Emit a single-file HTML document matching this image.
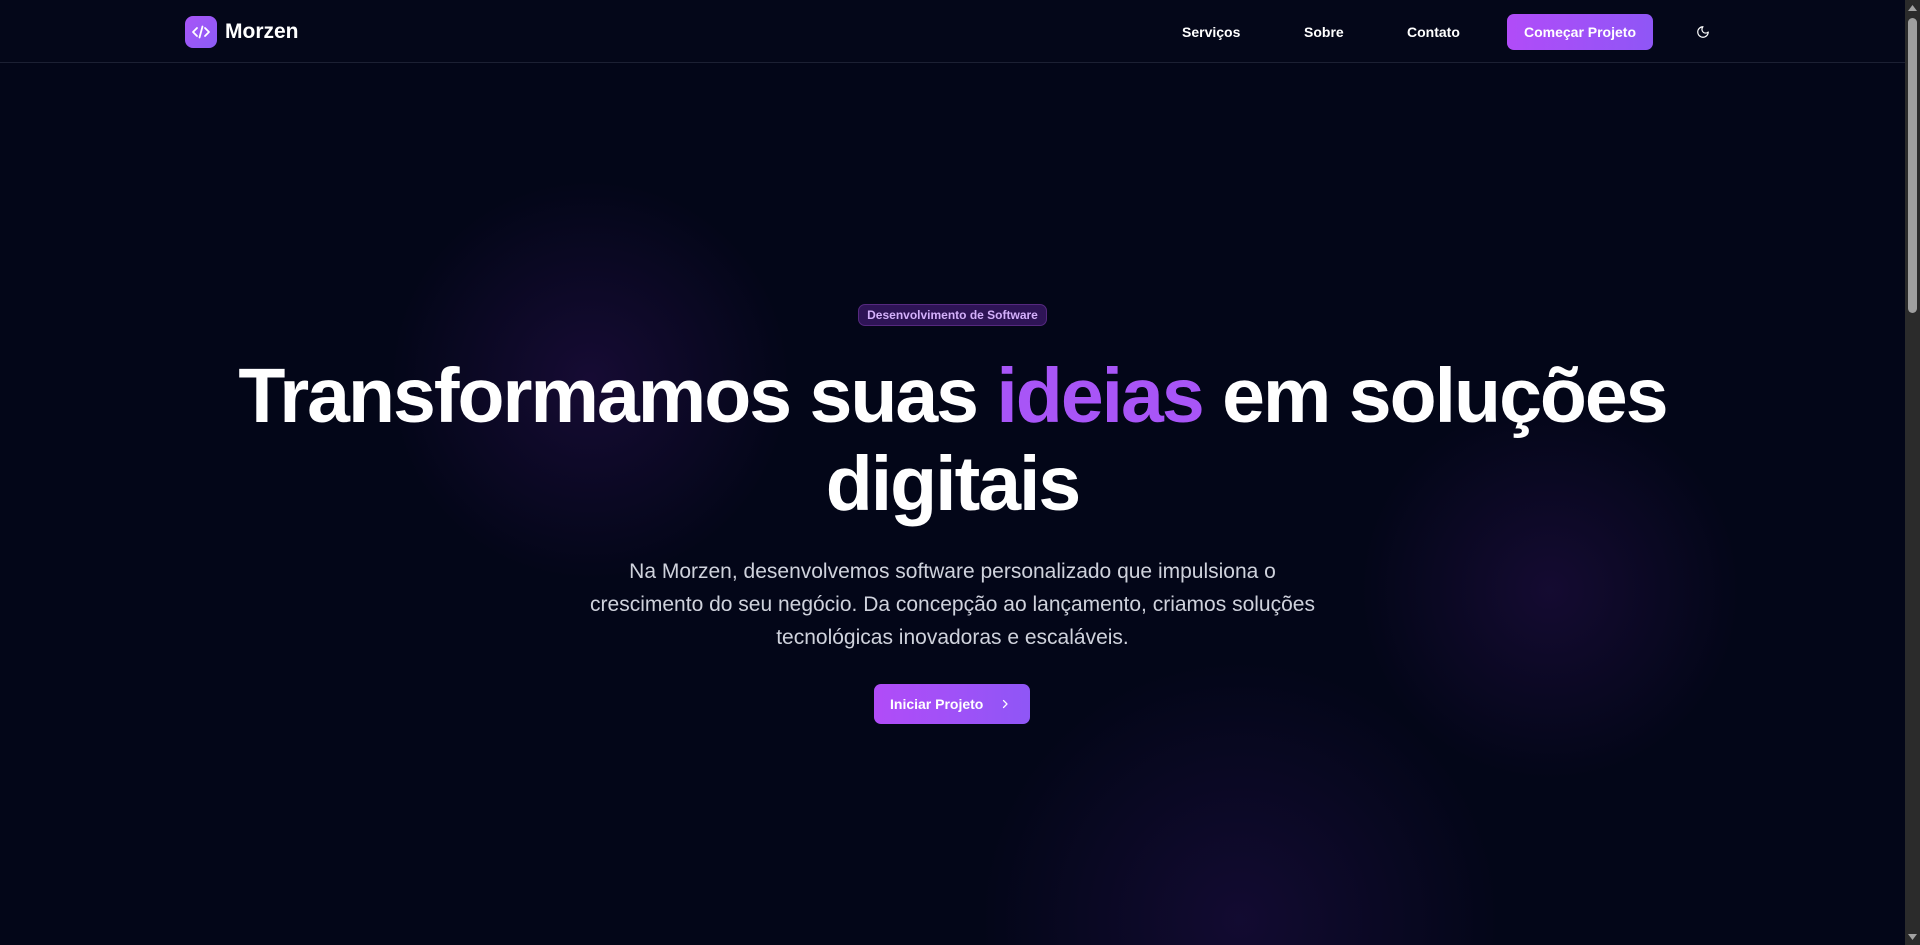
<!DOCTYPE html>
<html><head><meta charset="utf-8">
<style>
*{margin:0;padding:0;box-sizing:border-box}
html,body{width:1920px;height:945px;overflow:hidden;background:#030618;font-family:"Liberation Sans",sans-serif;color:#fff}
.page{position:absolute;left:0;top:0;width:1905px;height:945px;overflow:hidden;background:
radial-gradient(circle 200px at 590px 380px,rgba(90,30,150,0.22),rgba(90,30,150,0)),
radial-gradient(circle 190px at 1550px 590px,rgba(90,30,150,0.2),rgba(90,30,150,0)),
radial-gradient(circle 260px at 1240px 920px,rgba(80,30,150,0.2),rgba(80,30,150,0)),
#030618}
nav{position:absolute;left:0;top:0;width:1905px;height:63px;border-bottom:1px solid #1c2033;background:#040719}
.logo{position:absolute;left:185px;top:16px;width:32px;height:32px;border-radius:8px;background:linear-gradient(135deg,#a855f7,#8b5cf6)}
.brand{position:absolute;left:225px;top:20px;font-size:21px;font-weight:700}
.nl{position:absolute;top:24px;font-size:14px;font-weight:700;white-space:nowrap}
.cta{position:absolute;left:1507px;top:14px;width:146px;height:36px;border-radius:7px;background:linear-gradient(90deg,#b14cf8,#8f56f6);font-size:14px;font-weight:700;line-height:36px;text-align:center;white-space:nowrap}
.badge{position:absolute;left:858px;top:304px;width:189px;height:22px;border-radius:7px;background:#2e1456;border:1px solid #55287f;color:#d4b0fb;font-size:12px;font-weight:700;text-align:center;line-height:20px}
h1{position:absolute;left:0;width:1905px;top:352px;text-align:center;font-size:77px;font-weight:700;line-height:88px;letter-spacing:-2px}
h1 span{color:#a855f7}
p{position:absolute;left:0;width:1905px;top:555px;text-align:center;font-size:21px;line-height:33px;color:#cfd2dc;white-space:nowrap}
.btn{position:absolute;left:874px;top:684px;width:156px;height:40px;border-radius:7px;background:linear-gradient(90deg,#b14cf8,#8f56f6);font-size:14px;font-weight:700;line-height:40px;padding-left:16px}
.sb{position:absolute;left:1905px;top:0;width:15px;height:945px;background:#2b2b2b}
.th{position:absolute;left:1908px;top:18px;width:9px;height:295px;border-radius:5px;background:#9f9f9f}
</style></head><body>
<div class="page">
<nav>
<div class="logo"><svg width="32" height="32" viewBox="0 0 32 32" fill="none" stroke="#fff" stroke-width="1.8" stroke-linecap="round" stroke-linejoin="round"><path d="M12 12l-4 4 4 4M20 12l4 4-4 4M17.5 10.5l-3 11"/></svg></div>
<div class="brand">Morzen</div>
<div class="nl" style="left:1182px">Serviços</div>
<div class="nl" style="left:1304px">Sobre</div>
<div class="nl" style="left:1407px">Contato</div>
<div class="cta">Começar Projeto</div>
<svg style="position:absolute;left:1696px;top:25px" width="14" height="14" viewBox="0 0 24 24" fill="none" stroke="#fff" stroke-width="2" stroke-linecap="round" stroke-linejoin="round"><path d="M12 3a6 6 0 0 0 9 9 9 9 0 1 1-9-9Z"/></svg>
</nav>
<div class="badge">Desenvolvimento de Software</div>
<h1>Transformamos suas <span>ideias</span> em soluções<br>digitais</h1>
<p>Na Morzen, desenvolvemos software personalizado que impulsiona o<br>crescimento do seu negócio. Da concepção ao lançamento, criamos soluções<br>tecnológicas inovadoras e escaláveis.</p>
<div class="btn">Iniciar Projeto<svg style="position:absolute;left:125px;top:14px" width="12" height="12" viewBox="0 0 24 24" fill="none" stroke="#fff" stroke-width="2.5" stroke-linecap="round" stroke-linejoin="round"><path d="M9 5l7 7-7 7"/></svg></div>
</div>
<div class="sb"></div>
<svg style="position:absolute;left:1907px;top:4px" width="11" height="8" viewBox="0 0 11 8"><path d="M5.5 1L10 7H1Z" fill="#a3a3a3"/></svg>
<svg style="position:absolute;left:1907px;top:933px" width="11" height="8" viewBox="0 0 11 8"><path d="M5.5 7L10 1H1Z" fill="#a3a3a3"/></svg>
<div class="th"></div>
</body></html>
